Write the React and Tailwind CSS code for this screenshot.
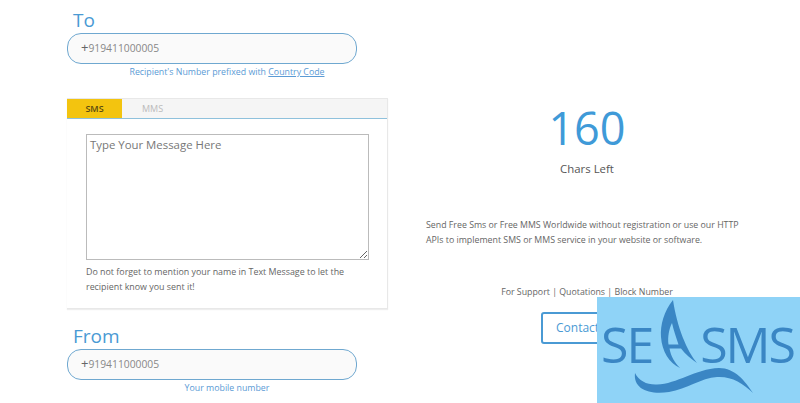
import React from "react";

const font = { fontFamily: '"Open Sans", sans-serif' };

const NumberField = ({ label, hint }) => (
  <div className="w-[321px]">
    <h3 className="h-[33px] pl-[6px] pt-[8px] text-[19px] leading-[24px] text-[#4a9ad4]">{label}</h3>
    <div className="flex h-[31px] w-[290px] items-center rounded-[14px] border border-[#6fa8d0] bg-[#fafafa] pl-[13px] text-[10.3px] text-[#888]">
      <span className="-mt-[2px] text-[13px] leading-none text-[#666]">+</span>
      <span>919411000005</span>
    </div>
    <p className="mt-[1px] w-[320px] text-center text-[8.8px] leading-[15px] text-[#5b9bd5]">{hint}</p>
  </div>
);

export default function App() {
  return (
    <div className="flex h-[403px] w-[800px] overflow-hidden bg-white" style={font}>
      <div className="ml-[67px] w-[321px]">
        <NumberField
          label="To"
          hint={
            <>
              Recipient's Number prefixed with <a className="underline">Country Code</a>
            </>
          }
        />

        <div className="mt-[18px] h-[211px] border border-t-0 border-l-0 border-[#e8e8e8] shadow-[0_1px_1px_#eee]">
          <div className="flex h-[21px] border-t border-b border-[#e8e8e8] border-b-[#8fc1dc] bg-[#f5f5f5] text-[9px] font-semibold">
            <div className="flex w-[55px] items-center justify-center bg-[#f3c40f] text-[#5a4a10]">SMS</div>
            <div className="flex w-[61px] items-center justify-center font-normal text-[#bbb]">MMS</div>
          </div>
          <div className="px-[19px] pt-[15px]">
            <textarea
              readOnly
              placeholder="Type Your Message Here"
              className="block h-[126px] w-[283px] border border-[#bbb] px-[3px] py-[1px] text-[11.4px] leading-[17px] placeholder:text-[#777]"
            />
            <p className="mt-[4px] w-[283px] text-[8.9px] leading-[15px] text-[#666]">
              Do not forget to mention your name in Text Message to let the recipient know you sent it!
            </p>
          </div>
        </div>

        <div className="mt-[7px]">
          <NumberField label="From" hint="Your mobile number" />
        </div>
      </div>

      <div className="ml-[38px] flex w-[322px] flex-col">
        <div className="mt-[95px] text-center text-[45px] leading-[65px] text-[#3f9ad8]">160</div>
        <div className="mt-[1px] text-center text-[11.4px] leading-[16px] text-[#555]">Chars Left</div>
        <p className="mt-[41px] text-[8.8px] leading-[15px] text-[#666]">
          Send Free Sms or Free MMS Worldwide without registration or use our HTTP APIs to implement SMS or MMS service in your website or software.
        </p>
        <p className="mt-[37px] text-center text-[8.8px] leading-[15px] text-[#666]">For Support | Quotations | Block Number</p>
        <button className="mt-[12px] ml-[115px] flex h-[32px] w-[120px] items-center rounded-[3px] border-2 border-[#4a9ad4] pl-[13px] text-[12px] text-[#4a9ad4]">
          Contact Us
        </button>
      </div>

      {/* logo sits over the page corner */}
      <div className="absolute left-[597px] top-[297px] h-[106px] w-[203px] overflow-hidden bg-[#8fd3f7] text-[#3a86c4]">
        <div className="flex h-[74px] items-end pl-[4px] text-[50px] leading-[54px] tracking-[-2px]">
          <span>SE</span>
          <span className="w-[48px]" />
          <span>SMS</span>
        </div>
        <svg className="absolute left-0 top-0" width="203" height="106" viewBox="0 0 203 106" fill="currentColor" fillRule="evenodd">
          <path d="M76 3 C67 14 63 28 64 40 C65 54 72 66 83 71 C78 66 74 60 72.5 51.5 L84 51.5 C88 57 94 62 100 66 C90 54 80 30 76 3 Z M75 26 C72 32 70.5 40 71.5 47.5 L81.5 47.5 C79 40 76.5 33 75 26 Z" />
          <path d="M38 76 C42 84 50 88 60 87.5 C80 87 98 72 122 71 C138 71 148 84 156 96 C146 86 134 79 120 80 C104 81 90 92 72 95 C52 98 36 92 38 76 Z" />
        </svg>
      </div>
    </div>
  );
}
